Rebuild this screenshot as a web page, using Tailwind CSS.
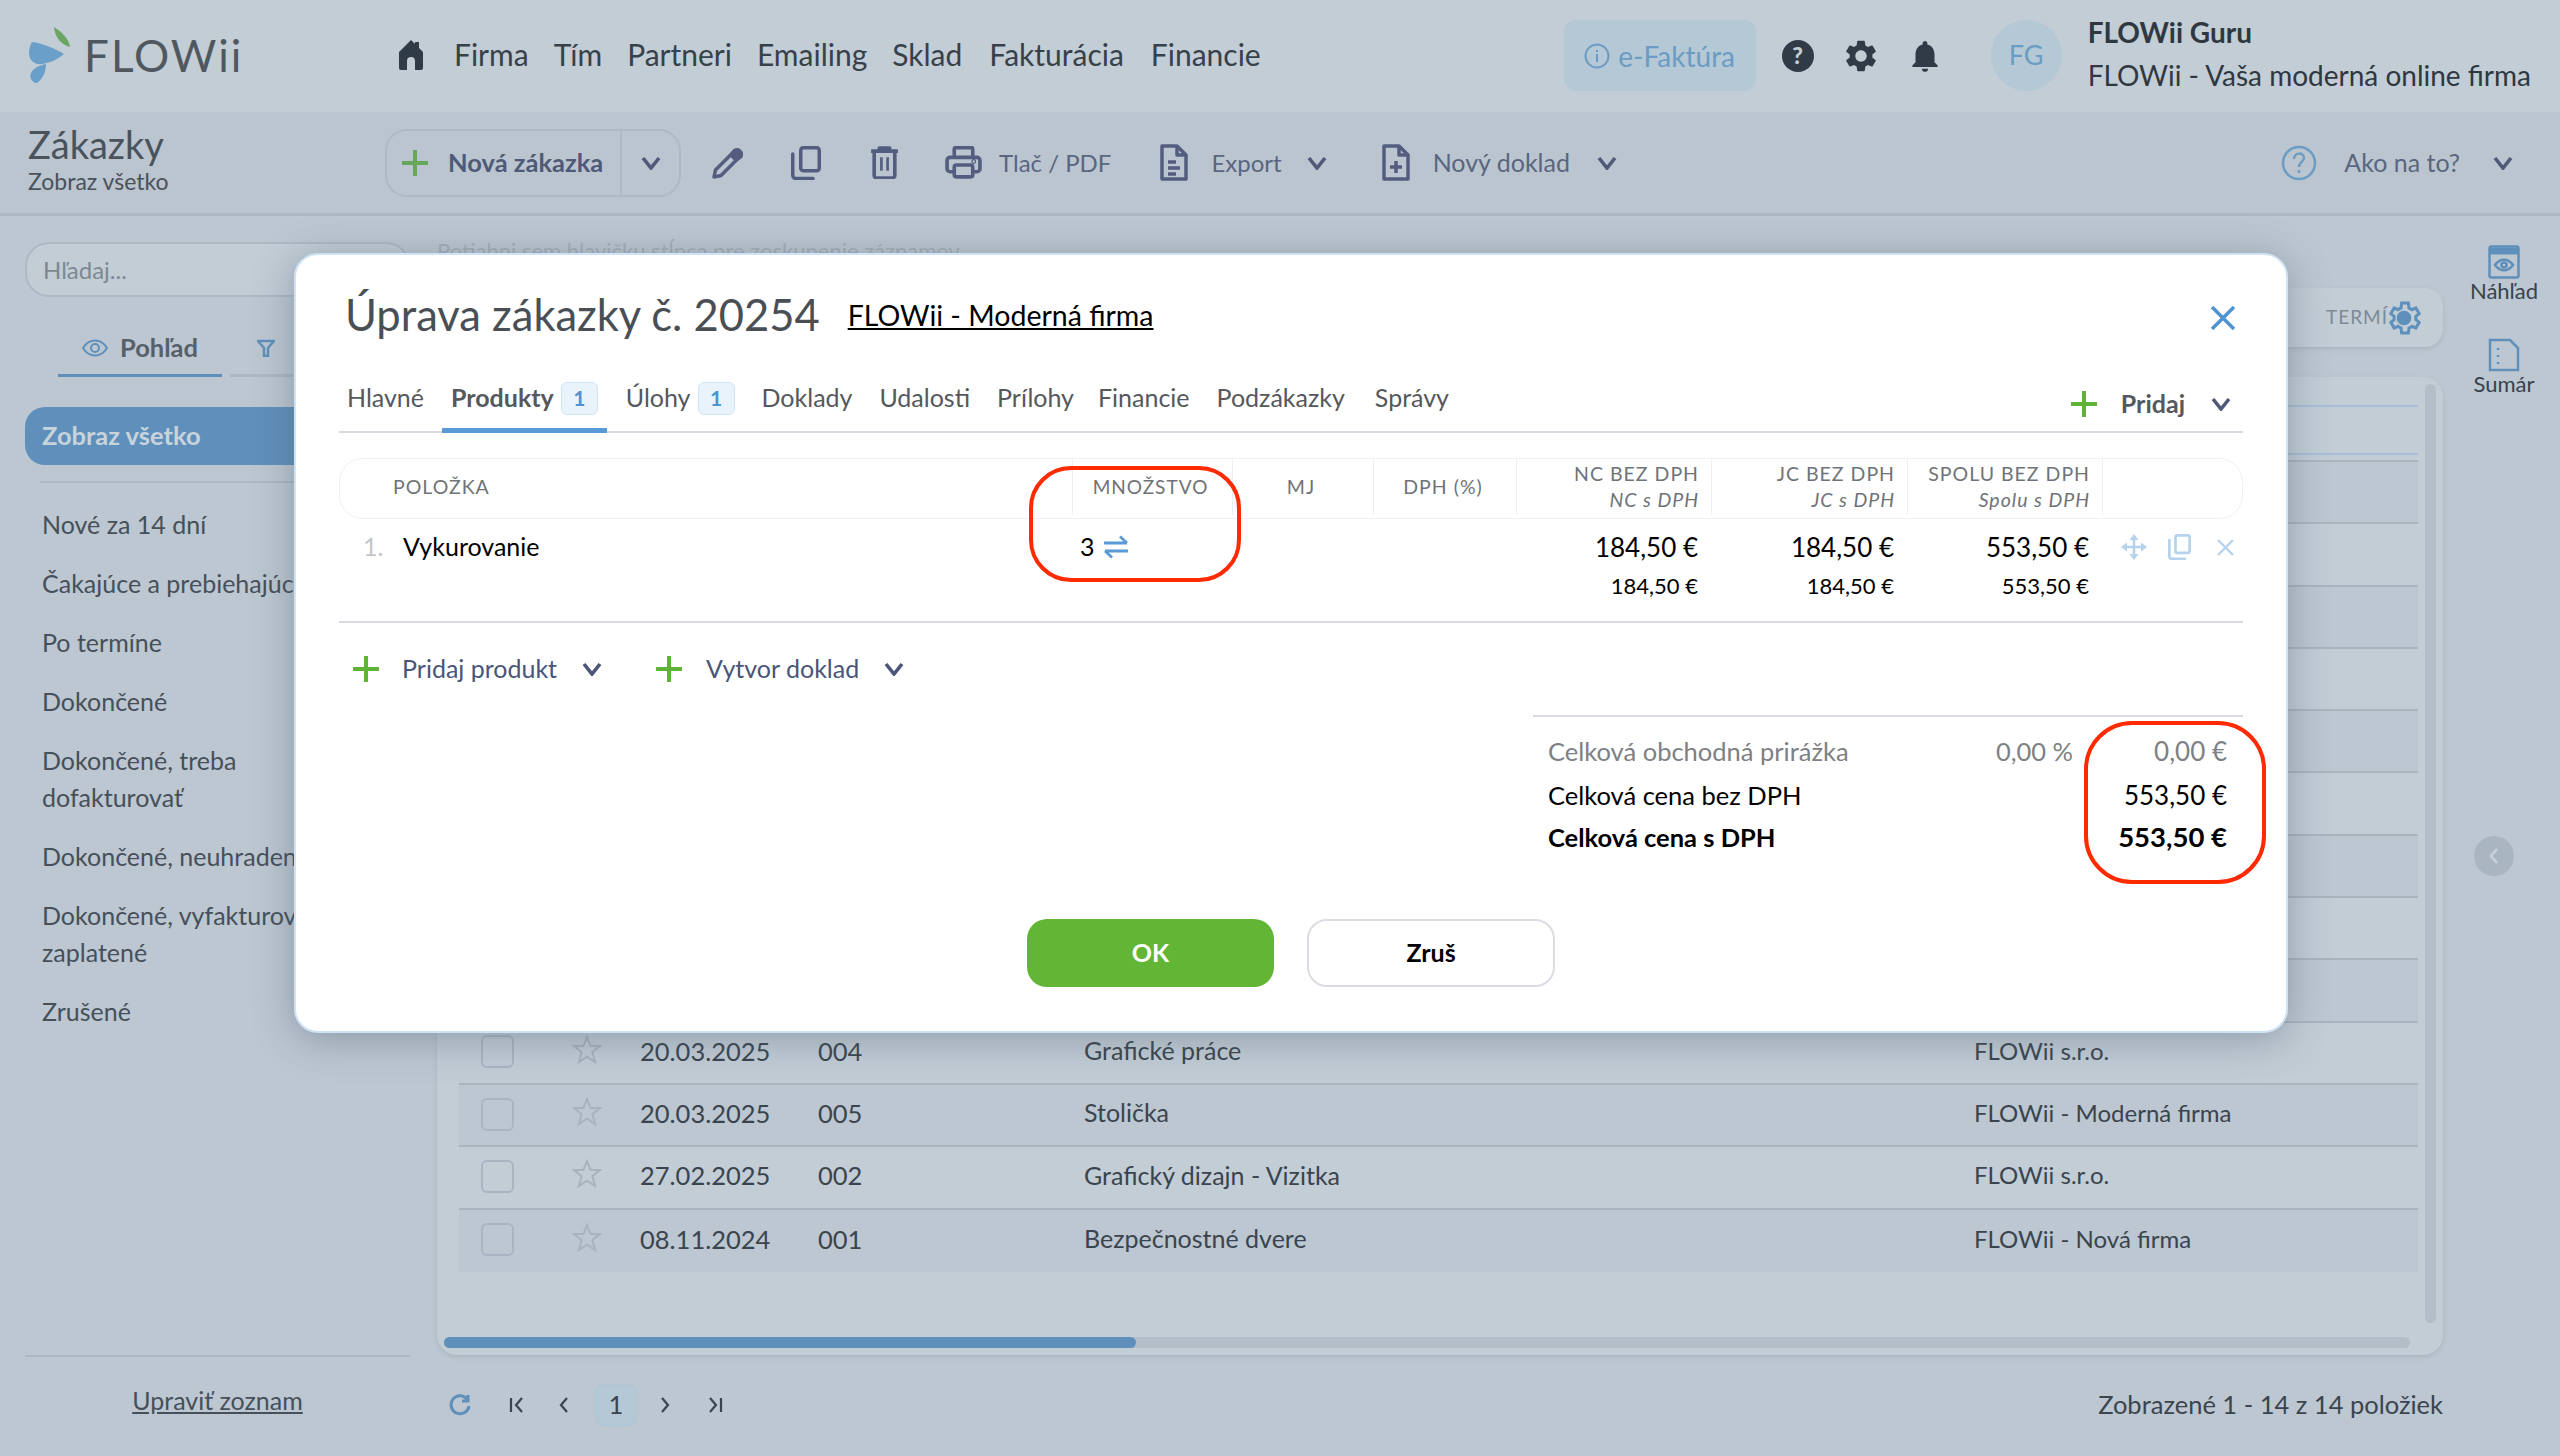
<!DOCTYPE html>
<html lang="sk">

<head>
  <meta charset="UTF-8">
  <title>Zákazky</title>
  <script src="https://cdn.jsdelivr.net/npm/@tailwindcss/browser@4"></script>
</head>

<body class="bg-[#bcc7d1] font-['Lato',sans-serif] text-[#38424c]">
  <svg class="hidden">
    <symbol id="chev" viewBox="0 0 20 14"><path d="M2 2l8 10 8-10" fill="none" stroke="currentColor" stroke-width="3.6" /></symbol>
    <symbol id="plus" viewBox="0 0 26 26"><path d="M13 1v24M1 13h24" fill="none" stroke="currentColor" stroke-width="4" stroke-linecap="round" /></symbol>
    <symbol id="star" viewBox="0 0 30 30"><path d="M15 2l3.600 9h9.400l-7.600 6.200 2.800 10L15 21.600l-8.200 5.600 2.800-10L2 11h9.400z" fill="none" stroke="currentColor" stroke-width="2" /></symbol>
    <symbol id="copy" viewBox="0 0 30 34"><g fill="none" stroke="currentColor" stroke-width="3.500" stroke-linecap="round" stroke-linejoin="round"><rect x="9.750" y="1.750" width="18.500" height="23" rx="2.500" /><path d="M1.750 8v21.500a3 3 0 0 0 3 3H22" /></g></symbol>
  </svg>

  <div class="relative h-[1456px] w-[2560px] overflow-hidden">
    <!-- Navbar -->
    <header class="flex h-[112px] items-center bg-[#c2cdd6] pb-[3px]">
      <div class="flex w-[396px] items-center pl-[28px]">
        <svg class="h-[56px] w-[44px]" viewBox="0 0 44 56">
          <path d="M26 0c8 5 15 12 16 20-8-2-15-9-16-20z" fill="#6ba563" />
          <path d="M4 15c10 1 24 7 32 12-7 6-15 9-22 10-8 1-13-4-13-11 0-4 1-8 3-11z" fill="#6a9fca" />
          <path d="M18 37c0 6-2 14-9 19-5 0-8-6-6-10 2-5 9-8 15-9z" fill="#6a9fca" />
        </svg>
        <span class="ml-[12px] text-[44px] font-normal leading-none tracking-[2px] text-[#50585f]">FLOWii</span>
      </div>
      <nav class="flex items-center gap-[25px] text-[30px] text-[#37414a]">
        <svg class="mr-[3px] h-[32px] w-[30px]" viewBox="0 0 30 32" fill="#2f3b46"><path d="M15 1L3 13v16a2 2 0 0 0 2 2h6v-9a4 4 0 0 1 8 0v9h6a2 2 0 0 0 2-2V13l-4-4V3h-4v2z" /></svg>
        <a>Firma</a><a>Tím</a><a>Partneri</a><a>Emailing</a><a>Sklad</a><a class="ml-[2px]">Fakturácia</a><a class="ml-[2px]">Financie</a>
      </nav>
      <div class="ml-auto flex translate-y-[1px] items-center pr-[29px]">
        <div class="flex h-[71px] w-[192px] items-center justify-center gap-[8px] rounded-[12px] bg-[#b5c8d5] text-[28px] text-[#6a9cc4]">
          <svg class="h-[26px] w-[26px]" viewBox="0 0 26 26" fill="none" stroke="currentColor" stroke-width="2"><circle cx="13" cy="13" r="11.500" /><path d="M13 11v8M13 7v2" /></svg>
          e-Faktúra
        </div>
        <div class="ml-[26px] flex h-[32px] w-[32px] items-center justify-center rounded-full bg-[#2f3b46] text-[23px] font-black text-[#c2cdd6]">?</div>
        <svg class="ml-[28px] h-[38px] w-[38px]" viewBox="0 0 24 24" fill="#2f3b46"><path d="M19.140 12.940c.04-.3.06-.61.06-.94 0-.32-.02-.64-.07-.94l2.030-1.580a.49.49 0 0 0 .12-.61l-1.920-3.320a.488.488 0 0 0-.59-.22l-2.390.96c-.5-.38-1.030-.7-1.620-.94l-.36-2.540a.484.484 0 0 0-.48-.41h-3.840c-.24 0-.43.17-.47.41l-.36 2.540c-.59.24-1.130.57-1.620.94l-2.390-.96c-.22-.08-.47 0-.59.22L2.740 8.870c-.12.21-.08.47.12.61l2.030 1.580c-.05.3-.09.63-.09.94s.02.64.07.94l-2.030 1.580a.49.49 0 0 0-.12.61l1.920 3.320c.12.22.37.29.59.22l2.390-.96c.5.38 1.030.7 1.620.94l.36 2.540c.05.24.24.41.48.41h3.840c.24 0 .44-.17.47-.41l.36-2.540c.59-.24 1.130-.56 1.620-.94l2.390.96c.22.08.47 0 .59-.22l1.920-3.320c.12-.22.07-.47-.12-.61l-2.010-1.580zM12 15.600c-1.980 0-3.600-1.620-3.600-3.600s1.620-3.600 3.600-3.600 3.600 1.620 3.600 3.600-1.620 3.600-3.600 3.600z" /></svg>
        <svg class="ml-[26px] h-[38px] w-[38px]" viewBox="0 0 24 24" fill="#2f3b46"><path d="M12 22c1.100 0 2-.9 2-2h-4c0 1.100.89 2 2 2zm6-6v-5c0-3.070-1.640-5.640-4.500-6.320V4c0-.83-.67-1.500-1.500-1.500s-1.500.67-1.500 1.500v.68C7.630 5.360 6 7.920 6 11v5l-2 2v1h16v-1l-2-2z" /></svg>
        <div class="ml-[47px] flex h-[71px] w-[71px] items-center justify-center rounded-full bg-[#b5c8d5] text-[27px] text-[#6a9cc4]">FG</div>
        <div class="ml-[26px] flex -translate-y-[2px] flex-col gap-[10px] text-[28px] leading-[33px] text-[#2f3840]">
          <span class="font-bold">FLOWii Guru</span>
          <span>FLOWii - Vaša moderná online firma</span>
        </div>
      </div>
    </header>

    <!-- Toolbar -->
    <div class="flex h-[104px] items-center border-b-[3px] border-[#adb8c3] bg-[#bac5cf] text-[24px] text-[#5a6580]">
      <div class="w-[385px] -translate-y-[3px] pl-[28px] text-[#4a525b]">
        <div class="text-[38px] leading-[42px]">Zákazky</div>
        <div class="text-[23px] leading-[32px]">Zobraz všetko</div>
      </div>
      <div class="flex h-[68px] w-[296px] items-center rounded-[22px] border-2 border-[#aeb9c6]">
        <svg class="ml-[15px] h-[26px] w-[26px] text-[#65a85c]"><use href="#plus" /></svg>
        <span class="ml-[20px] w-[172px] text-[25.500px] font-bold text-[#4f5a78]">Nová zákazka</span>
        <div class="flex h-full flex-1 items-center justify-center border-l-2 border-[#aeb9c6]">
          <svg class="h-[14px] w-[20px] text-[#4f5a78]"><use href="#chev" /></svg>
        </div>
      </div>
      <svg class="ml-[30px] h-[34px] w-[34px] text-[#525d80]" viewBox="0 0 34 34" fill="none" stroke="currentColor" stroke-width="3.500" stroke-linejoin="round"><path d="M3 31l1.500-7L24 4.500a3 3 0 0 1 4.200 0l1.300 1.300a3 3 0 0 1 0 4.200L10 29.500z" /><path d="M20 9l3.500-4.500 6.500 6L25 14z" fill="currentColor" /></svg>
      <svg class="ml-[46px] h-[34px] w-[30px] text-[#525d80]"><use href="#copy" /></svg>
      <svg class="ml-[49px] h-[33px] w-[29px] text-[#525d80]" viewBox="0 0 28 32" fill="none" stroke="currentColor" stroke-width="3.500" stroke-linejoin="round"><path d="M1 5h26M9 4V2h10v2M4 6v22.500A2.500 2.500 0 0 0 6.500 31h15a2.500 2.500 0 0 0 2.500-2.500V6" /><path d="M11 11v13M17 11v13" stroke-width="2.500" /></svg>
      <svg class="ml-[46px] h-[33px] w-[37px] text-[#525d80]" viewBox="0 0 36 32" fill="none" stroke="currentColor" stroke-width="3.500" stroke-linejoin="round"><path d="M9 10V3a1.500 1.500 0 0 1 1.500-1.500h15A1.500 1.500 0 0 1 27 3v7M9 25H5a3 3 0 0 1-3-3v-8a3 3 0 0 1 3-3h26a3 3 0 0 1 3 3v8a3 3 0 0 1-3 3h-4" /><rect x="9" y="18.500" width="18" height="11.500" rx="2" /><circle cx="28" cy="15" r=".6" /></svg>
      <span class="ml-[17px]">Tlač / PDF</span>
      <svg class="ml-[48px] h-[37px] w-[30px] text-[#525d80]" viewBox="0 0 30 37" fill="none" stroke="currentColor" stroke-width="3.500" stroke-linejoin="round"><path d="M3 2h15l9 9v24H3zM18 2v9h9M9 18h8M9 24h12M9 30h8" /></svg>
      <span class="ml-[22px]">Export</span>
      <svg class="ml-[25px] h-[14px] w-[20px] text-[#4f5a78]"><use href="#chev" /></svg>
      <svg class="ml-[54px] h-[37px] w-[30px] text-[#525d80]" viewBox="0 0 30 37" fill="none" stroke="currentColor" stroke-width="3.500" stroke-linejoin="round"><path d="M3 2h15l9 9v24H3zM18 2v9h9M15 17v12M9 23h12" /></svg>
      <span class="ml-[22px] text-[25px]">Nový doklad</span>
      <svg class="ml-[27px] h-[14px] w-[20px] text-[#4f5a78]"><use href="#chev" /></svg>
      <div class="ml-auto flex items-center pr-[47px]">
        <svg class="h-[36px] w-[36px] text-[#6a9cc4]" viewBox="0 0 36 36" fill="none" stroke="currentColor" stroke-width="2.500"><circle cx="18" cy="18" r="16" /><path d="M13 14c0-7 10-7 10-1 0 4-5 4-5 9M18 25v3" /></svg>
        <span class="ml-[27px] text-[25px]">Ako na to?</span>
        <svg class="ml-[33px] h-[14px] w-[20px] text-[#4f5a78]"><use href="#chev" /></svg>
      </div>
    </div>

    <div class="flex h-[1240px]">
      <!-- Sidebar -->
      <aside class="flex w-[437px] flex-col pl-[25px] pr-[27px] text-[25px] leading-[37px] text-[#46505a]">
        <div class="mt-[26px] flex h-[55px] items-center rounded-[24px] border-2 border-[#aeb9c6] bg-[#c2cdd6] pl-[16px] text-[24px] text-[#7d8893]">Hľadaj...</div>
        <div class="mt-[32px] flex h-[48px] border-0">
          <div class="ml-[33px] flex w-[164px] items-center border-b-[3px] border-[#5f90bb] pb-[8px] pl-[24px]">
            <svg class="h-[18px] w-[26px] text-[#5f90bb]" viewBox="0 0 26 18" fill="none" stroke="currentColor" stroke-width="2"><path d="M1 9c6-10 18-10 24 0-6 10-18 10-24 0z" /><circle cx="13" cy="9" r="4" /></svg>
            <span class="ml-[12px] text-[25.500px] font-bold text-[#56606a]">Pohľad</span>
          </div>
          <div class="ml-[8px] flex flex-1 items-center border-b-[3px] border-[#adb8c3] pb-[8px] pl-[27px]">
            <svg class="h-[18px] w-[18px] text-[#5f90bb]" viewBox="0 0 18 18" fill="none" stroke="currentColor" stroke-width="2.500"><path d="M1 2h16l-6 7v8H7V9z" /></svg>
          </div>
        </div>
        <div class="mt-[30px] flex h-[58px] items-center rounded-[20px] bg-[#5f90bb] pb-[1px] pl-[17px] text-[25.500px] font-bold text-[#c8d3dc]">Zobraz všetko</div>
        <div class="ml-[15px] mt-[16px] border-t-2 border-[#adb8c3]"></div>
        <ul class="mt-[23px] flex flex-col gap-[22px] pl-[17px]">
          <li>Nové za 14 dní</li>
          <li class="whitespace-nowrap">Čakajúce a prebiehajúce</li>
          <li>Po termíne</li>
          <li>Dokončené</li>
          <li>Dokončené, treba<br>dofakturovať</li>
          <li class="whitespace-nowrap">Dokončené, neuhradené</li>
          <li class="whitespace-nowrap">Dokončené, vyfakturované<br>zaplatené</li>
          <li>Zrušené</li>
        </ul>
        <div class="mt-auto">
          <div class="border-t-2 border-[#adb8c3]"></div>
          <div class="flex h-[99px] items-start justify-center pt-[25px]"><a class="underline">Upraviť zoznam</a></div>
        </div>
      </aside>

      <!-- Main list -->
      <main class="flex w-[2006px] flex-col">
        <div class="mt-[22px] h-[26px] text-[22px] leading-[26px] text-[#a4afba]">Potiahni sem hlavičku stĺpca pre zoskupenie záznamov</div>
        <div class="mt-[24px] flex h-[59px] items-center justify-end rounded-[18px] bg-[#c2cdd6] pr-[19px] text-[19px] tracking-[1px] text-[#7f8a95] shadow-[0_2px_4px_#a9b5c0]">
          <span class="-mr-[4px]">TERMÍ</span>
          <svg class="h-[40px] w-[40px] text-[#5f90bb]" viewBox="0 0 24 24" fill="none" stroke="currentColor" stroke-width="1.800"><circle cx="12" cy="12" r="3.500" fill="currentColor" /><path d="M19.100 13c.1-.7.1-1.300 0-2l2-1.600-2-3.400-2.400 1a7 7 0 0 0-1.700-1L14.600 3h-4l-.4 3a7 7 0 0 0-1.700 1l-2.400-1-2 3.400 2 1.600c-.1.700-.1 1.300 0 2l-2 1.600 2 3.400 2.400-1a7 7 0 0 0 1.700 1l.4 3h4l.4-3a7 7 0 0 0 1.700-1l2.400 1 2-3.400z" /></svg>
        </div>
        <div class="mt-[30px] flex h-[978px] flex-col rounded-[20px] bg-[#c2cdd6] shadow-[0_2px_4px_#a9b5c0]">
          <div class="flex h-[946px] pl-[22px] pt-[25px]">
            <div class="w-[1959px] text-[25.500px] text-[#3a444e]">
              <div class="h-[60px] border-b-2 border-[#a9b4bf] pt-[3px]">
                <div class="h-[50px] border-y-2 border-[#a7bfd6]"></div>
              </div>
              <div class="h-[62.300px] border-b-2 border-[#a9b4bf] bg-[#bcc7d1]"></div>
              <div class="h-[62.300px] border-b-2 border-[#a9b4bf]"></div>
              <div class="h-[62.300px] border-b-2 border-[#a9b4bf] bg-[#bcc7d1]"></div>
              <div class="h-[62.300px] border-b-2 border-[#a9b4bf]"></div>
              <div class="h-[62.300px] border-b-2 border-[#a9b4bf] bg-[#bcc7d1]"></div>
              <div class="h-[62.300px] border-b-2 border-[#a9b4bf]"></div>
              <div class="h-[62.300px] border-b-2 border-[#a9b4bf] bg-[#bcc7d1]"></div>
              <div class="h-[62.300px] border-b-2 border-[#a9b4bf]"></div>
              <div class="h-[62.300px] border-b-2 border-[#a9b4bf] bg-[#bcc7d1]"></div>
              <div class="flex h-[62.300px] items-center border-b-2 border-[#a9b4bf] pb-[4px]">
                <span class="ml-[22px] h-[33px] w-[33px] translate-y-[1px] rounded-[6px] border-2 border-[#a9b5c3]"></span>
                <svg class="ml-[58px] h-[30px] w-[30px] -translate-y-[1px] text-[#a9b3bd]"><use href="#star" /></svg>
                <span class="ml-[38px] w-[178px]">20.03.2025</span><span class="w-[266px]">004</span><span class="w-[890px] text-[25px]">Grafické práce</span><span class="text-[24px]">FLOWii s.r.o.</span>
              </div>
              <div class="flex h-[62.300px] items-center border-b-2 border-[#a9b4bf] bg-[#bcc7d1] pb-[4px]">
                <span class="ml-[22px] h-[33px] w-[33px] translate-y-[1px] rounded-[6px] border-2 border-[#a9b5c3]"></span>
                <svg class="ml-[58px] h-[30px] w-[30px] -translate-y-[1px] text-[#a9b3bd]"><use href="#star" /></svg>
                <span class="ml-[38px] w-[178px]">20.03.2025</span><span class="w-[266px]">005</span><span class="w-[890px] text-[25px]">Stolička</span><span class="text-[24px]">FLOWii - Moderná firma</span>
              </div>
              <div class="flex h-[62.300px] items-center border-b-2 border-[#a9b4bf] pb-[4px]">
                <span class="ml-[22px] h-[33px] w-[33px] translate-y-[1px] rounded-[6px] border-2 border-[#a9b5c3]"></span>
                <svg class="ml-[58px] h-[30px] w-[30px] -translate-y-[1px] text-[#a9b3bd]"><use href="#star" /></svg>
                <span class="ml-[38px] w-[178px]">27.02.2025</span><span class="w-[266px]">002</span><span class="w-[890px] text-[25px]">Grafický dizajn - Vizitka</span><span class="text-[24px]">FLOWii s.r.o.</span>
              </div>
              <div class="flex h-[62.300px] items-center bg-[#bcc7d1] pb-[4px]">
                <span class="ml-[22px] h-[33px] w-[33px] translate-y-[1px] rounded-[6px] border-2 border-[#a9b5c3]"></span>
                <svg class="ml-[58px] h-[30px] w-[30px] -translate-y-[1px] text-[#a9b3bd]"><use href="#star" /></svg>
                <span class="ml-[38px] w-[178px]">08.11.2024</span><span class="w-[266px]">001</span><span class="w-[890px] text-[25px]">Bezpečnostné dvere</span><span class="text-[24px]">FLOWii - Nová firma</span>
              </div>
            </div>
            <div class="-mt-[18px] ml-[7px] w-[11px] rounded-full bg-[#b3bec9]"></div>
          </div>
          <div class="ml-[7px] mt-[14px] h-[11px] w-[1966px] rounded-full bg-[#b3bec9]">
            <div class="h-full w-[692px] rounded-full bg-[#5f90bb]"></div>
          </div>
        </div>
        <!-- Pagination -->
        <div class="flex flex-1 items-center pb-[2px] text-[25.500px] text-[#3a444e]">
          <svg class="ml-[12px] h-[22px] w-[22px] text-[#5f90bb]" viewBox="0 0 22 22" fill="none" stroke="currentColor" stroke-width="3"><path d="M18 5a9 9 0 1 0 2 7M19 1v6h-6" /></svg>
          <svg class="ml-[38px] h-[16px] w-[16px]" viewBox="0 0 16 16" fill="none" stroke="currentColor" stroke-width="2.200"><path d="M2 1v14M13 1L7 8l6 7" /></svg>
          <svg class="ml-[33px] h-[16px] w-[12px]" viewBox="0 0 12 16" fill="none" stroke="currentColor" stroke-width="2.200"><path d="M9 1L3 8l6 7" /></svg>
          <span class="ml-[25px] flex h-[42px] w-[42px] items-center justify-center rounded-[8px] border border-[#aec6d8] bg-[#b5c8d5]">1</span>
          <svg class="ml-[22px] h-[16px] w-[12px]" viewBox="0 0 12 16" fill="none" stroke="currentColor" stroke-width="2.200"><path d="M3 1l6 7-6 7" /></svg>
          <svg class="ml-[36px] h-[16px] w-[16px]" viewBox="0 0 16 16" fill="none" stroke="currentColor" stroke-width="2.200"><path d="M14 1v14M3 1l6 7-6 7" /></svg>
          <span class="ml-auto">Zobrazené 1 - 14 z 14 položiek</span>
        </div>
      </main>

      <!-- Right rail -->
      <div class="flex flex-1 flex-col items-center pl-[5px] text-[22px] leading-[26px] text-[#38424c]">
        <svg class="mt-[29px] h-[34px] w-[32px] text-[#5f90bb]" viewBox="0 0 32 34" fill="none" stroke="currentColor" stroke-width="2.500"><rect x="1.500" y="1.500" width="29" height="31" rx="2" /><path d="M1.500 6h29" stroke-width="7" /><path d="M7 20c5-7 13-7 18 0-5 7-13 7-18 0z" /><circle cx="16" cy="20" r="2.500" /></svg>
        <span class="-mt-[1px]">Náhľad</span>
        <svg class="mt-[34px] h-[34px] w-[32px] text-[#5f90bb]" viewBox="0 0 32 34" fill="none" stroke="currentColor" stroke-width="2.500"><path d="M2 2h20l8 8v22H2zM10 10v2M10 17v2M10 24v2" /></svg>
        <span class="-mt-[1px]">Sumár</span>
      </div>
    </div>

    <!-- Scroll arrow -->
    <div class="absolute left-[2474px] top-[836px] flex h-[40px] w-[40px] items-center justify-center rounded-full bg-[#a9b6c2]">
      <svg class="h-[16px] w-[12px] text-[#c8d2da]" viewBox="0 0 12 16" fill="none" stroke="currentColor" stroke-width="2.500"><path d="M9 1L3 8l6 7" /></svg>
    </div>

    <!-- Modal -->
    <div class="absolute left-[294px] top-[253px] h-[780px] w-[1994px] rounded-[24px] border-2 border-[#cfe3f6] bg-white px-[43px] text-[25px] text-[#55585c] shadow-[0_6px_40px_rgba(80,95,110,0.45)]">
      <div class="flex h-[120px] items-center pl-[6px]">
        <h2 class="text-[43.500px] text-[#4a4f55]">Úprava zákazky č. 20254</h2>
        <a class="ml-[28px] text-[28.500px] text-black underline">FLOWii - Moderná firma</a>
        <svg class="ml-auto mr-[8px] mt-[6px] h-[24px] w-[24px] text-[#4f93cf]" viewBox="0 0 24 24" fill="none" stroke="currentColor" stroke-width="3.500"><path d="M1 1l22 22M23 1L1 23" /></svg>
      </div>
      <div class="flex h-[58px] items-stretch border-b-2 border-[#d9dae1]">
        <a class="flex items-center pb-[10px] pl-[8px]">Hlavné</a>
        <a class="ml-[18px] -mb-[2px] flex items-center border-b-[5px] border-[#5b9bd5] px-[9px] pb-[7px] font-bold">Produkty
          <span class="ml-[7px] flex h-[33px] w-[37px] items-center justify-center rounded-[6px] border border-[#cfe4f5] bg-[#e8f3fc] text-[21px] text-[#4f93cf]">1</span></a>
        <a class="ml-[19px] flex items-center pb-[10px]">Úlohy
          <span class="ml-[7px] flex h-[33px] w-[37px] items-center justify-center rounded-[6px] border border-[#cfe4f5] bg-[#e8f3fc] text-[21px] font-bold text-[#4f93cf]">1</span></a>
        <a class="ml-[27px] flex items-center pb-[10px]">Doklady</a>
        <a class="ml-[27px] flex items-center pb-[10px]">Udalosti</a>
        <a class="ml-[27px] flex items-center pb-[10px]">Prílohy</a>
        <a class="ml-[24px] flex items-center pb-[10px]">Financie</a>
        <a class="ml-[27px] flex items-center pb-[10px]">Podzákazky</a>
        <a class="ml-[30px] flex items-center pb-[10px]">Správy</a>
        <div class="ml-auto flex items-center pt-[2px] font-bold">
          <svg class="h-[26px] w-[26px] text-[#5fb336]"><use href="#plus" /></svg>
          <span class="ml-[24px]">Pridaj</span>
          <svg class="ml-[26px] mr-[12px] h-[14px] w-[20px] text-[#4f5a78]"><use href="#chev" /></svg>
        </div>
      </div>

      <!-- Items table -->
      <div class="mt-[25px] grid h-[61px] grid-cols-[732px_160px_141px_143px_195px_196px_195px_143px] items-stretch rounded-[24px] border border-[#f0f0f3] pb-[3px] text-[19.500px] leading-[26px] tracking-[1px] text-[#6f7378]">
        <div class="flex items-center pl-[53px]">POLOŽKA</div>
        <div class="flex items-center justify-center border-l border-[#eceef1] pr-[4px] text-[19px]">MNOŽSTVO</div>
        <div class="flex items-center justify-center border-l border-[#eceef1] pr-[4px]">MJ</div>
        <div class="flex items-center justify-center border-l border-[#eceef1] pr-[4px]">DPH (%)</div>
        <div class="flex flex-col items-end justify-center border-l border-[#eceef1] pr-[12px]">NC BEZ DPH<i>NC s DPH</i></div>
        <div class="flex flex-col items-end justify-center border-l border-[#eceef1] pr-[12px]">JC BEZ DPH<i>JC s DPH</i></div>
        <div class="flex flex-col items-end justify-center border-l border-[#eceef1] pr-[12px]">SPOLU BEZ DPH<i>Spolu s DPH</i></div>
        <div class="border-l border-[#eceef1]"></div>
      </div>
      <div class="grid h-[104px] grid-cols-[732px_160px_141px_143px_195px_196px_195px_143px] border-b-2 border-[#d9dae1] pt-[9px] text-black">
        <div class="flex h-[38px] items-center"><span class="ml-[24px] w-[40px] text-[#c4c6ca]">1.</span>Vykurovanie</div>
        <div class="flex h-[38px] items-center pl-[9px]">3
          <svg class="ml-[8px] h-[24px] w-[26px] text-[#5b9bd5]" viewBox="0 0 26 24" fill="none" stroke="currentColor" stroke-width="2.800"><path d="M1 8h23M17 1.500L24 8M25 16H2M9 22.500L2 16" /></svg>
        </div>
        <div></div>
        <div></div>
        <div class="pr-[12px] text-right text-[26px] leading-[38px]">184,50 €<div class="text-[22px] leading-[40px]">184,50 €</div></div>
        <div class="pr-[12px] text-right text-[26px] leading-[38px]">184,50 €<div class="text-[22px] leading-[40px]">184,50 €</div></div>
        <div class="pr-[12px] text-right text-[26px] leading-[38px]">553,50 €<div class="text-[22px] leading-[40px]">553,50 €</div></div>
        <div class="flex h-[38px] items-center pl-[20px]">
          <svg class="h-[26px] w-[26px] text-[#b5d3ec]" viewBox="0 0 26 26"><path d="M13 4v18M4 13h18" fill="none" stroke="currentColor" stroke-width="2.500" /><path d="M13 0l4.500 6h-9zM13 26l4.500-6h-9zM0 13l6-4.500v9zM26 13l-6-4.500v9z" fill="currentColor" /></svg>
          <svg class="ml-[21px] h-[26px] w-[23px] text-[#b5d3ec]"><use href="#copy" /></svg>
          <svg class="ml-[26px] h-[17px] w-[17px] text-[#b5d3ec]" viewBox="0 0 17 17" fill="none" stroke="currentColor" stroke-width="2.400"><path d="M1 1l15 15M16 1L1 16" /></svg>
        </div>
      </div>

      <div class="flex h-[92px] items-center text-[#4a5578]">
        <svg class="ml-[14px] h-[26px] w-[26px] text-[#5fb336]"><use href="#plus" /></svg>
        <span class="ml-[23px]">Pridaj produkt</span>
        <svg class="ml-[25px] h-[14px] w-[20px]"><use href="#chev" /></svg>
        <svg class="ml-[54px] h-[26px] w-[26px] text-[#5fb336]"><use href="#plus" /></svg>
        <span class="ml-[24px]">Vytvor doklad</span>
        <svg class="ml-[25px] h-[14px] w-[20px]"><use href="#chev" /></svg>
      </div>

      <!-- Totals -->
      <div class="ml-auto w-[710px] border-t-2 border-[#d9dae1] pl-[15px] pr-[16px] pt-[15px] text-[25.500px] leading-[38px]">
        <div class="flex text-[#7d8084]"><span>Celková obchodná prirážka</span><span class="ml-auto">0,00 %</span><span class="w-[154px] text-right text-[26px]">0,00 €</span></div>
        <div class="mt-[6px] flex text-black"><span>Celková cena bez DPH</span><span class="ml-auto text-[26px]">553,50 €</span></div>
        <div class="mt-[4px] flex font-bold text-black"><span>Celková cena s DPH</span><span class="ml-auto text-[27.500px]">553,50 €</span></div>
      </div>

      <div class="mt-[63px] flex justify-center gap-[33px] font-bold">
        <button class="h-[68px] w-[247px] rounded-[20px] bg-[#63b536] text-white">OK</button>
        <button class="h-[68px] w-[248px] rounded-[20px] border-2 border-[#dcdde2] text-black">Zruš</button>
      </div>

      <!-- Red annotations -->
      <div class="absolute left-[733px] top-[211px] h-[116px] w-[212px] rounded-[42px] border-[4px] border-[#ff2a00]"></div>
      <div class="absolute left-[1788px] top-[466px] h-[163px] w-[182px] rounded-[48px] border-[4px] border-[#ff2a00]"></div>
    </div>
  </div>
</body>

</html>
